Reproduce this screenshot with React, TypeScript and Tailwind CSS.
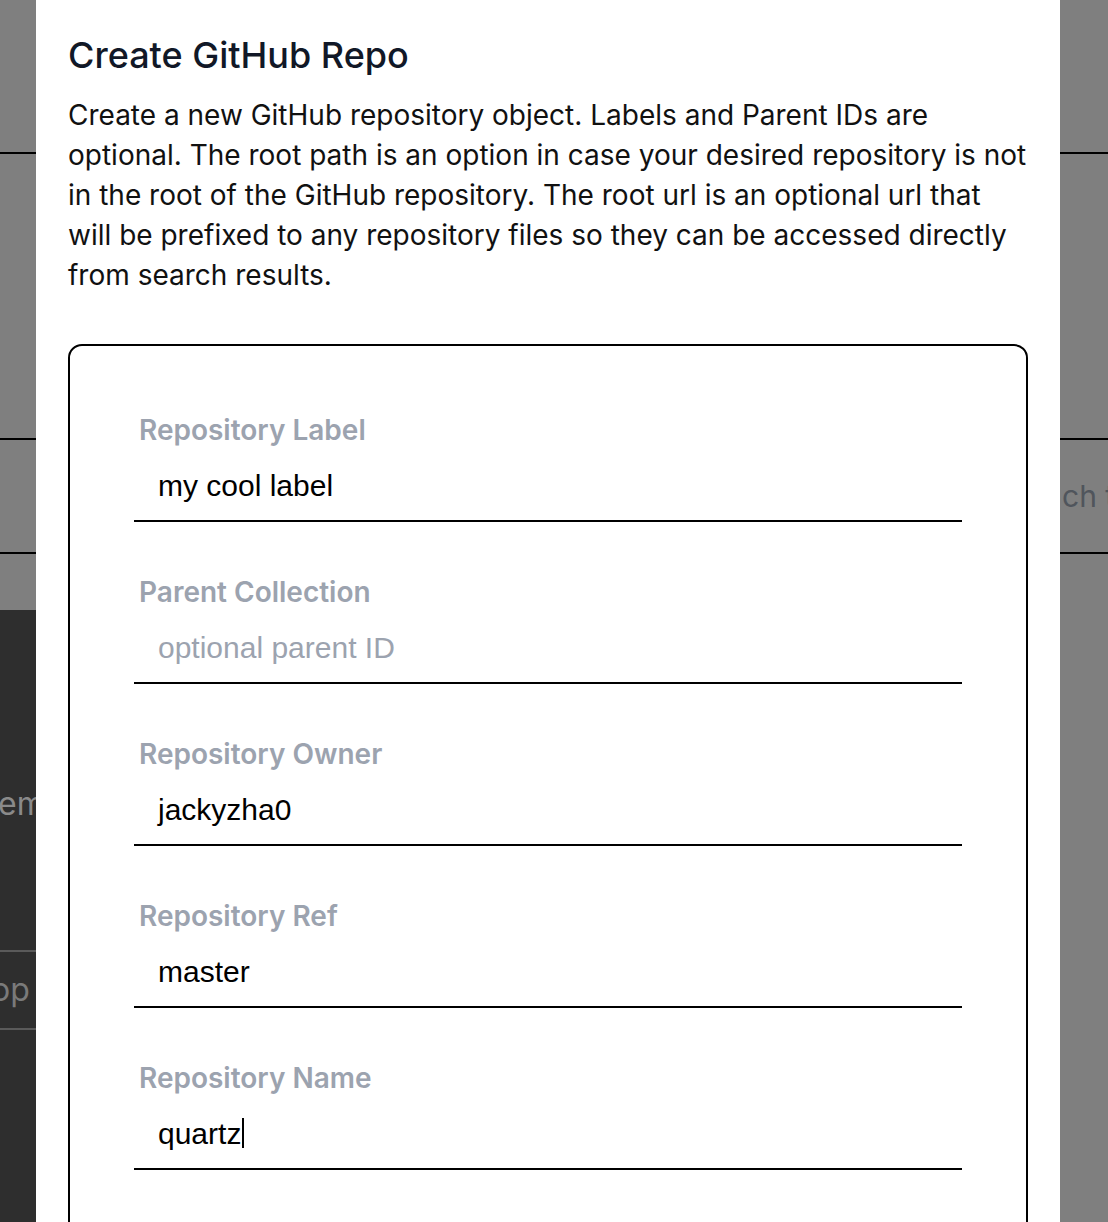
import React from "react";

type Field = { label: string; value?: string; placeholder?: string; caret?: boolean };

const fields: Field[] = [
  { label: "Repository Label", value: "my cool label" },
  { label: "Parent Collection", placeholder: "optional parent ID" },
  { label: "Repository Owner", value: "jackyzha0" },
  { label: "Repository Ref", value: "master" },
  { label: "Repository Name", value: "quartz", caret: true },
];

export default function App() {
  return (
    <div className="relative h-[1222px] w-[1108px] overflow-hidden bg-[#7f7f7f] font-['Inter',sans-serif]">
      {/* page behind the dialog, dimmed */}
      <div className="h-[152px]" />
      <div className="h-[286px] border-t-2 border-black" />
      <div className="flex h-[116px] items-center border-y-2 border-black">
        <span className="ml-[1062px] whitespace-nowrap text-[30px] text-[#50555c]">ch the</span>
      </div>
      <div className="h-[56px]" />
      <div className="flex h-[612px] w-[300px] flex-col bg-[#2e2e2e] pt-[174px]">
        <span className="-ml-[2px] text-[32px] leading-[40px] text-[#8a8a8a]">em</span>
        <div className="h-[126px]" />
        <div className="flex h-[80px] items-center border-y-2 border-[#5a5a5a]">
          <span className="-ml-[9px] text-[32px] text-[#7a7a7a]">op</span>
        </div>
      </div>

      {/* dialog */}
      <div className="absolute left-[36px] top-0 h-[1222px] w-[1024px] bg-white px-8 pt-[35px]">
        <h2 className="text-[36px] font-medium leading-[40px] text-[#111827]">Create GitHub Repo</h2>
        <p className="mt-[20px] text-[28px] leading-[40px] text-[#111]">
          Create a new GitHub repository object. Labels and Parent IDs are optional. The root path is an option in case
          your desired repository is not in the root of the GitHub repository. The root url is an optional url that will
          be prefixed to any repository files so they can be accessed directly from search results.
        </p>

        <div className="mt-[49px] rounded-[14px] border-2 border-black px-16 pt-16 pb-24">
          <div className="flex flex-col gap-[50px]">
            {fields.map((f) => (
              <div key={f.label} className="flex flex-col">
                <label className="pl-[5px] text-[28px] font-semibold leading-[40px] text-[#9ca3af]">{f.label}</label>
                <div className="flex h-[72px] items-center border-b-2 border-black pl-6 font-['Liberation_Sans',Arial,sans-serif] text-[30px]">
                  {f.value ? (
                    <span className="text-black">{f.value}</span>
                  ) : (
                    <span className="text-[#9ca3af]">{f.placeholder}</span>
                  )}
                  {f.caret && <span className="ml-px inline-block h-[30px] w-[2px] bg-black" />}
                </div>
              </div>
            ))}
          </div>
        </div>
      </div>
    </div>
  );
}
